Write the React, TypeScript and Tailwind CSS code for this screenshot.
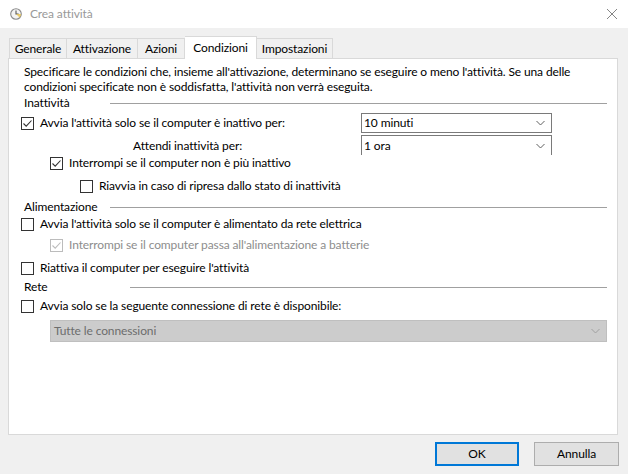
import React from "react";

const F = { fontFamily: 'Lato, "Noto Sans", "Liberation Sans", sans-serif' };

function Check({ checked, disabled }: { checked?: boolean; disabled?: boolean }) {
  const c = disabled ? "#bcbcbc" : "#333333";
  return (
    <span
      className="inline-flex w-[13px] h-[13px] shrink-0 items-center justify-center bg-white border"
      style={{ borderColor: c }}
    >
      {checked && (
        <svg width="11" height="11" viewBox="0 0 11 11">
          <path d="M1.5 5.5 L4.2 8.2 L9.5 2.5" fill="none" stroke={c} strokeWidth="1.1" />
        </svg>
      )}
    </span>
  );
}

function CbRow({ label, checked, disabled, indent, className }: { label: string; checked?: boolean; disabled?: boolean; indent: string; className?: string }) {
  return (
    <div className={`flex items-center h-[16px] ${indent} ${className ?? ""}`}>
      <Check checked={checked} disabled={disabled} />
      <span className={`ml-[6px] ${disabled ? "text-[#8d8d8d]" : "text-black"}`}>{label}</span>
    </div>
  );
}

function Heading({ label, lineStart, className }: { label: string; lineStart: string; className?: string }) {
  return (
    <div className={`flex items-center h-[16px] ${className ?? ""}`}>
      <span className={`pl-[15px] ${lineStart}`}>{label}</span>
      <div className="flex-1 h-px bg-[#a0a0a0] mr-[10px]" />
    </div>
  );
}

function Chevron({ color }: { color: string }) {
  return (
    <svg width="9" height="6" viewBox="0 0 9 6">
      <path d="M0.5 1 L4.5 5 L8.5 1" fill="none" stroke={color} strokeWidth="1" />
    </svg>
  );
}

function Tab({ label, w, selected, first }: { label: string; w: string; selected?: boolean; first?: boolean }) {
  if (selected) {
    return (
      <div className={`${w} h-[23px] mb-[-1px] border border-[#d9d9d9] border-b-0 border-l-0 flex justify-center pt-[2px] bg-white`}>
        {label}
      </div>
    );
  }
  return (
    <div className={`${w} h-[20px] border border-[#d9d9d9] border-b-0 ${first ? "" : "border-l-0"} flex items-center justify-center bg-[#f0f0f0]`}>
      {label}
    </div>
  );
}

export default function App() {
  return (
    <div className="w-[628px] h-[474px] bg-[#f0f0f0] flex flex-col text-[12px] tracking-[-0.12px] text-black overflow-hidden" style={F}>
      {/* Title bar */}
      <div className="h-[28px] bg-white flex items-center shrink-0">
        <svg className="ml-[10px]" width="12" height="12" viewBox="0 0 12 12">
          <circle cx="6" cy="6" r="5.3" fill="#f3f3f3" stroke="#8a8a8a" strokeWidth="1.1" />
          <path d="M6 2.6 V6 H8.6" fill="none" stroke="#555" strokeWidth="1.1" />
          <path d="M6 6 L9.5 9.5 A5 5 0 0 0 11 6 Z" fill="#e8c24a" opacity="0.8" />
        </svg>
        <span className="ml-[8px] text-[#999999] text-[12px]">Crea attività</span>
        <div className="flex-1" />
        <svg className="mr-[10px]" width="12" height="12" viewBox="0 0 12 12">
          <path d="M1 1 L11 11 M11 1 L1 11" stroke="#777" strokeWidth="0.9" />
        </svg>
      </div>

      {/* Tabs */}
      <div className="flex items-end h-[31px] pl-[9px] mt-[-1px] shrink-0 relative z-10">
        <Tab label="Generale" w="w-[58px]" first />
        <Tab label="Attivazione" w="w-[71px]" />
        <Tab label="Azioni" w="w-[47px]" />
        <Tab label="Condizioni" w="w-[72px]" selected />
        <Tab label="Impostazioni" w="w-[76px]" />
      </div>

      {/* Panel */}
      <div className="ml-[8px] w-[610px] h-[377px] bg-white border border-[#d9d9d9] flex flex-col pt-[5px] shrink-0">
        <div className="pl-[15px] pr-[4px] leading-[15px] whitespace-nowrap">
          Specificare le condizioni che, insieme all'attivazione, determinano se eseguire o meno l'attività. Se una delle
          <br />
          condizioni specificate non è soddisfatta, l'attività non verrà eseguita.
        </div>

        <Heading label="Inattività" lineStart="w-[101px]" className="mt-[1px]" />
        <div className="flex items-center h-[22px] mt-[1px]">
          <div className="pl-[12px] flex items-center w-[352px]">
            <Check checked />
            <span className="ml-[6px]">Avvia l'attività solo se il computer è inattivo per:</span>
          </div>
          <div className="w-[191px] h-[20px] border border-[#7a7a7a] flex items-center pl-[2px] pr-[6px] justify-between">
            <span>10 minuti</span>
            <Chevron color="#606060" />
          </div>
        </div>
        <div className="flex items-start h-[21px]">
          <div className="w-[352px] pl-[124px] pt-[3px]">Attendi inattività per:</div>
          <div className="w-[191px] h-[20px] mt-[1px] border border-b-0 border-[#7a7a7a] flex items-center pl-[2px] pr-[6px] justify-between">
            <span>1 ora</span>
            <Chevron color="#606060" />
          </div>
        </div>
        <CbRow indent="pl-[41px]" checked label="Interrompi se il computer non è più inattivo" />
        <CbRow indent="pl-[71px]" className="mt-[7px]" label="Riavvia in caso di ripresa dallo stato di inattività" />

        <Heading label="Alimentazione" lineStart="w-[101px]" className="mt-[5px]" />
        <CbRow indent="pl-[12px]" className="mt-[1px]" label="Avvia l'attività solo se il computer è alimentato da rete elettrica" />
        <CbRow indent="pl-[41px]" className="mt-[5px]" checked disabled label="Interrompi se il computer passa all'alimentazione a batterie" />
        <CbRow indent="pl-[12px]" className="mt-[7px]" label="Riattiva il computer per eseguire l'attività" />

        <Heading label="Rete" lineStart="w-[121px]" className="mt-[3px]" />
        <CbRow indent="pl-[12px]" className="mt-[3px]" label="Avvia solo se la seguente connessione di rete è disponibile:" />
        <div className="ml-[41px] mr-[10px] mt-[6px] h-[22px] bg-[#cccccc] border border-[#bfbfbf] flex items-center justify-between pl-[3px] pr-[6px]">
          <span className="text-[#6d6d6d]">Tutte le connessioni</span>
          <Chevron color="#a0a0a0" />
        </div>
      </div>

      {/* Buttons */}
      <div className="flex justify-end mt-[7px] pr-[9px] gap-[15px]">
        <button className="w-[84px] h-[24px] bg-[#e1e1e1] border-2 border-[#0078d7] flex items-center justify-center text-[12px]" style={F}>OK</button>
        <button className="w-[85px] h-[24px] bg-[#e1e1e1] border border-[#adadad] flex items-center justify-center text-[12px]" style={F}>Annulla</button>
      </div>
    </div>
  );
}
